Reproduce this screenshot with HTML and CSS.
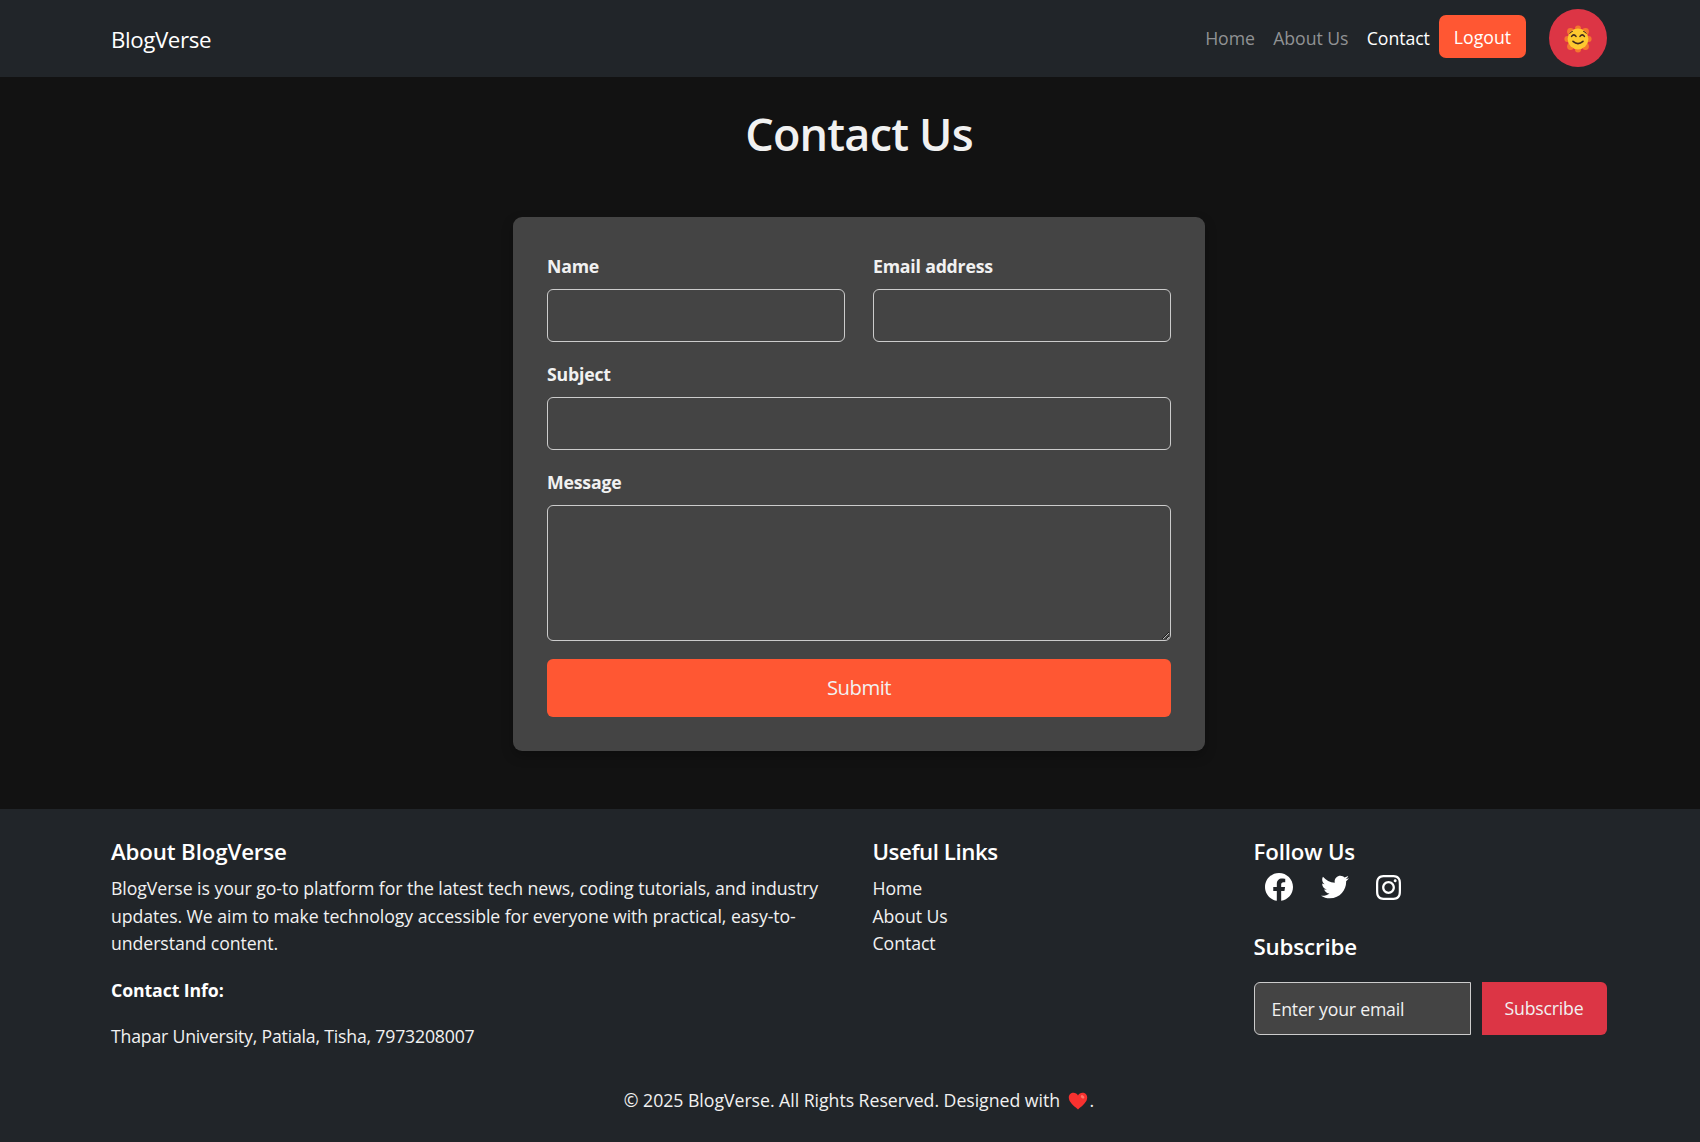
FILE: index.html
```html
<!DOCTYPE html>
<html lang="en">
<head>
<meta charset="utf-8">
<title>BlogVerse - Contact Us</title>
<link rel="stylesheet" href="styles.css">
</head>
<body>
<nav class="navbar">
  <div class="container navbar-inner">
    <a class="brand" href="#">BlogVerse</a>
    <div class="nav-links">
      <a class="nav-link" href="#">Home</a>
      <a class="nav-link" href="#">About Us</a>
      <a class="nav-link active" href="#">Contact</a>
    </div>
    <a class="logout" href="#">Logout</a>
    <button class="theme-toggle" type="button" aria-label="Toggle theme">
      <svg class="sun" viewBox="0 0 28 28">
        <g fill="#f4772e">
          <circle cx="14" cy="3.4" r="3"/><circle cx="14" cy="24.6" r="3"/>
          <circle cx="3.4" cy="14" r="3"/><circle cx="24.6" cy="14" r="3"/>
          <circle cx="6.5" cy="6.5" r="3.400"/><circle cx="21.5" cy="6.5" r="3.400"/>
          <circle cx="6.5" cy="21.5" r="3.400"/><circle cx="21.5" cy="21.5" r="3.400"/>
        </g>
        <circle cx="14" cy="14" r="10.4" fill="#fdc92f"/>
        <g fill="none" stroke="#40291d" stroke-width="1.6" stroke-linecap="round">
          <path d="M7.6 11.400q2.200-3 4.400 0M16 11.400q2.200-3 4.400 0M9 16.400q5 4.400 10 0"/>
          <path d="M5.800 8.400q1-1.800 2.600-2M22.200 8.400q-1-1.800-2.600-2" stroke-width="1"/>
        </g>
      </svg>
    </button>
  </div>
</nav>

<main class="contact">
  <h1 class="title">Contact Us</h1>
  <form class="card">
    <div class="row">
      <div class="field">
        <label class="label" for="name">Name</label>
        <input class="input" id="name" type="text">
      </div>
      <div class="field">
        <label class="label" for="email">Email address</label>
        <input class="input" id="email" type="email">
      </div>
    </div>
    <div class="field">
      <label class="label" for="subject">Subject</label>
      <input class="input" id="subject" type="text">
    </div>
    <div class="field field-message">
      <label class="label" for="message">Message</label>
      <textarea class="input message" id="message"></textarea>
    </div>
    <button class="submit" type="button">Submit</button>
  </form>
</main>

<footer class="footer">
  <div class="container footer-cols">
    <section class="about">
      <h5 class="heading">About BlogVerse</h5>
      <p class="text">BlogVerse is your go-to platform for the latest tech news, coding tutorials, and industry<br>updates. We aim to make technology accessible for everyone with practical, easy-to-<br>understand content.</p>
      <p class="text strong">Contact Info:</p>
      <p class="text address">Thapar University, Patiala, Tisha, 7973208007</p>
    </section>
    <section class="links">
      <h5 class="heading links-heading">Useful Links</h5>
      <ul class="link-list">
        <li><a href="#">Home</a></li>
        <li><a href="#">About Us</a></li>
        <li><a href="#">Contact</a></li>
      </ul>
    </section>
    <section class="follow">
      <h5 class="heading">Follow Us</h5>
      <div class="social">
        <svg class="icon-fb" viewBox="8 8 496 496"><path d="M504 256C504 119 393 8 256 8S8 119 8 256c0 123.78 90.69 226.38 209.25 245V327.69h-63V256h63v-54.64c0-62.15 37-96.48 93.67-96.48 27.14 0 55.52 4.84 55.52 4.84v61h-31.28c-30.8 0-40.41 19.12-40.41 38.73V256h68.78l-11 71.69h-57.78V501C413.31 482.38 504 379.78 504 256z"/></svg>
        <svg class="icon-tw" viewBox="0 0 512 512"><path d="M459.37 151.716c.325 4.548.325 9.097.325 13.645 0 138.72-105.583 298.558-298.558 298.558-59.452 0-114.68-17.219-161.137-47.106 8.447.974 16.568 1.299 25.34 1.299 49.055 0 94.213-16.568 130.274-44.832-46.132-.975-84.792-31.188-98.112-72.772 6.498.974 12.995 1.624 19.818 1.624 9.421 0 18.843-1.3 27.614-3.573-48.081-9.747-84.143-51.98-84.143-102.985v-1.299c13.969 7.797 30.214 12.67 47.431 13.319-28.264-18.843-46.781-51.005-46.781-87.391 0-19.492 5.197-37.36 14.294-52.954 51.655 63.675 129.3 105.258 216.365 109.807-1.624-7.797-2.599-15.918-2.599-24.04 0-57.828 46.782-104.934 104.934-104.934 30.213 0 57.502 12.67 76.67 33.137 23.715-4.548 46.456-13.32 66.599-25.34-7.798 24.366-24.366 44.833-46.132 57.827 21.117-2.273 41.584-8.122 60.426-16.243-14.292 20.791-32.161 39.308-52.628 54.253z"/></svg>
        <svg class="icon-ig" viewBox="0 32 448 448"><path d="M224.1 141c-63.6 0-114.9 51.3-114.9 114.9s51.3 114.9 114.9 114.9S339 319.5 339 255.9 287.7 141 224.1 141zm0 189.6c-41.1 0-74.7-33.5-74.7-74.7s33.5-74.7 74.7-74.7 74.7 33.5 74.7 74.7-33.6 74.7-74.7 74.7zm146.4-194.3c0 14.9-12 26.8-26.8 26.8-14.9 0-26.8-12-26.8-26.8s12-26.8 26.8-26.8 26.8 12 26.8 26.8zm76.1 27.2c-1.7-35.9-9.9-67.7-36.2-93.9-26.2-26.2-58-34.4-93.9-36.2-37-2.1-147.9-2.1-184.9 0-35.8 1.7-67.6 9.9-93.9 36.1s-34.4 58-36.2 93.9c-2.1 37-2.1 147.9 0 184.9 1.7 35.9 9.9 67.7 36.2 93.9s58 34.4 93.9 36.2c37 2.1 147.9 2.1 184.9 0 35.9-1.7 67.7-9.9 93.9-36.2 26.2-26.2 34.4-58 36.2-93.9 2.1-37 2.1-147.8 0-184.8zM398.8 388c-7.8 19.6-22.9 34.7-42.6 42.6-29.5 11.7-99.5 9-132.1 9s-102.7 2.6-132.1-9c-19.6-7.8-34.7-22.9-42.6-42.6-11.7-29.5-9-99.5-9-132.1s-2.6-102.7 9-132.1c7.8-19.6 22.9-34.7 42.6-42.6 29.5-11.7 99.5-9 132.1-9s102.7-2.6 132.1 9c19.6 7.8 34.7 22.9 42.6 42.6 11.7 29.5 9 99.5 9 132.1s2.7 102.7-9 132.1z"/></svg>
      </div>
      <h5 class="heading">Subscribe</h5>
      <form class="subscribe">
        <input class="input subscribe-input" type="email" placeholder="Enter your email">
        <button class="subscribe-btn" type="button">Subscribe</button>
      </form>
    </section>
  </div>
  <p class="text copyright">© 2025 BlogVerse. All Rights Reserved. Designed with
    <svg class="heart" viewBox="0 0 20 18"><path fill="#f8312f" d="M10 17.4C5 13.4.8 10 .8 5.6.8 2.800 2.900.8 5.500.8 7.400.8 9.100 1.800 10 3.400 10.900 1.800 12.600.8 14.500.8c2.600 0 4.700 2 4.700 4.800 0 4.400-4.200 7.800-9.200 11.800z"/><ellipse cx="14.600" cy="4.800" rx="2" ry="1.400" fill="#ff7468" transform="rotate(35 14.600 4.800)"/></svg>.</p>
</footer>
</body>
</html>
```
FILE: styles.css
```css
* { box-sizing: border-box; }

html { overflow: hidden; background: #121212; }

/* The centred layout is slightly wider than the window. */
body {
  margin: 0;
  width: 1718px;
  background: #121212;
  color: #fff;
  font-family: "Open Sans", "Noto Sans", sans-serif;
  font-size: 17.7px;
  line-height: 27.7px;
  letter-spacing: -0.07px;
}

a { color: inherit; text-decoration: none; }
button, input, textarea { font: inherit; letter-spacing: inherit; color: inherit; }

.container { width: 1496px; margin: 0 auto; }

.navbar { height: 77px; background: #212529; }
.navbar-inner { display: flex; align-items: center; height: 77px; }
.brand { margin-right: auto; padding-top: 2px; font-size: 22.3px; letter-spacing: -0.4px; }
.nav-links { display: flex; padding-top: 1px; }
.nav-link { padding: 0 9.2px; color: #909294; }
.nav-link.active { color: #fff; }
.logout {
  width: 87px;
  height: 43px;
  margin-bottom: 4px;
  border-radius: 7px;
  background: #ff5733;
  line-height: 45px;
  letter-spacing: 0;
  text-align: center;
}
.theme-toggle {
  display: flex;
  align-items: center;
  justify-content: center;
  width: 58px;
  height: 58px;
  margin: 0 0 1px 23px;
  padding: 2px 0 0;
  border: 0;
  border-radius: 50%;
  background: #dc3545;
}
.sun { width: 28px; height: 28px; }

.contact { height: 732px; padding-top: 29px; }
.title {
  margin: 0;
  height: 111px;
  color: #f1f1f1;
  font-size: 45px;
  font-weight: 600;
  line-height: 56px;
  letter-spacing: -0.8px;
  text-align: center;
}
.card {
  display: flex;
  flex-direction: column;
  width: 692px;
  height: 534px;
  margin: 0 auto;
  padding: 34px;
  border-radius: 9px;
  background: #444;
  box-shadow: 0 5px 12px rgba(0, 0, 0, 0.25);
}
.row { display: grid; grid-template-columns: 1fr 1fr; gap: 28px; }
.field { display: flex; flex-direction: column; height: 108px; }
.field-message { height: 192px; }
.label { height: 38px; padding-top: 2px; color: #f1f1f1; font-weight: 700; letter-spacing: -0.2px; }
.input {
  width: 100%;
  height: 53px;
  padding: 0 17px;
  border: 1px solid #ccc;
  border-radius: 6px;
  outline: 0;
  background: #444;
}
.message { height: 136px; resize: vertical; }
.submit {
  height: 58px;
  border: 0;
  border-radius: 6px;
  background: #ff5733;
  color: #f1f1f1;
  font-size: 20.3px;
  letter-spacing: -0.5px;
}

.footer { height: 333px; padding-top: 27px; background: #212529; }
.footer-cols { display: grid; grid-template-columns: 761.5px 381px 353.5px; height: 239px; }
.heading { margin: 0; height: 39px; font-size: 22.3px; font-weight: 600; line-height: 31px; letter-spacing: -0.15px; }
.links-heading { letter-spacing: -0.45px; }
.text { margin: 0 0 18.5px; color: #f1f1f1; white-space: nowrap; }
.text.strong { color: #fff; font-weight: 700; letter-spacing: -0.1px; }
.text.address { letter-spacing: -0.2px; }
.link-list { margin: 0; padding: 0; list-style: none; color: #f1f1f1; }

.social { display: flex; align-items: center; height: 28px; margin: -2px 0 30px 11px; fill: #fff; }
.icon-fb { width: 28px; height: 28px; margin-right: 28px; }
.icon-tw { width: 28px; height: 28px; margin-right: 27px; }
.icon-ig { width: 25px; height: 25px; }

.subscribe { display: flex; gap: 11px; margin-top: 12px; }
.subscribe-input { width: 217px; border-radius: 6px 0 0 6px; letter-spacing: -0.2px; }
.subscribe-input::placeholder { color: #f1f1f1; opacity: 1; }
.subscribe-btn {
  width: 125px;
  height: 53px;
  padding: 0;
  border: 0;
  border-radius: 0 6px 6px 0;
  background: #dc3545;
  color: #f1f1f1;
  letter-spacing: -0.2px;
}

.copyright { margin: 12px 0 0; letter-spacing: -0.03px; text-align: center; }
.heart { width: 20px; height: 18px; margin-left: 3px; margin-right: 2px; vertical-align: -3px; }
```
